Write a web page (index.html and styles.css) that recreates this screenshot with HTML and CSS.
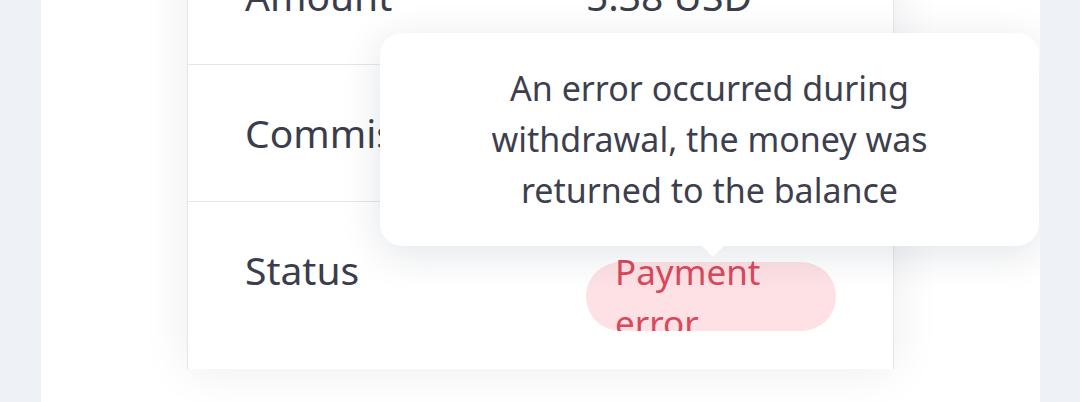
FILE: index.html
```html
<!DOCTYPE html>
<html>
<head>
<meta charset="utf-8">
<link rel="stylesheet" href="styles.css">
</head>
<body>
<div class="panel">
  <div class="details">
    <div class="row first">
      <div class="label">Amount</div>
      <div class="value">5.38 USD</div>
    </div>
    <div class="row">
      <div class="label">Commission</div>
      <div class="value">0.00 USD</div>
    </div>
    <div class="row last">
      <div class="label">Status</div>
      <div class="value">
        <div class="badge"><span>Payment error</span></div>
      </div>
    </div>
  </div>
  <div class="tooltip">
    <p>An error occurred during<br>withdrawal, the money was<br>returned to the balance</p>
  </div>
</div>
</body>
</html>
```

FILE: styles.css
```css
html, body {
  margin: 0;
  padding: 0;
}
body {
  background: #eef1f5;
  font-family: "Noto Sans", "Open Sans", sans-serif;
  overflow: hidden;
  height: 402px;
}
.panel {
  position: relative;
  margin: 0 40px 0 41px;
  height: 402px;
  background: #ffffff;
  overflow: hidden;
}
.details {
  margin-left: 146px;
  width: 705px;
  margin-top: -72px;
  border-left: 1px solid #e6e6e9;
  border-right: 1px solid #e6e6e9;
  background: #fff;
  box-shadow: 0 0 45px rgba(20, 30, 60, 0.08);
}
.row {
  display: grid;
  grid-template-columns: 341px 1fr;
  padding-left: 57px;
  height: 136px;
  border-bottom: 1px solid #e6e6e9;
  align-items: center;
  box-sizing: content-box;
}
.row.last {
  border-bottom: none;
  height: 167px;
  align-items: start;
}
.label, .value {
  font-size: 39px;
  color: #3b3d4d;
  line-height: 52px;
}
.row.last .label {
  padding-top: 42px;
}
.row.last .value {
  padding-top: 60px;
}
.badge {
  display: flow-root;
  width: 250px;
  height: 69px;
  border-radius: 35px;
  background: #fde1e5;
  box-sizing: border-box;
  padding: 0 30px 0 29px;
  clip-path: inset(-20px 0 0 0);
  color: #d9495c;
  font-size: 35px;
  line-height: 51px;
}
.badge span {
  display: block;
  margin-top: -16px;
}
.tooltip {
  position: absolute;
  left: 339px;
  top: 33px;
  width: 659px;
  height: 213px;
  background: #fff;
  border-radius: 22px;
  box-shadow: 0 8px 40px rgba(20, 30, 60, 0.12);
  display: flex;
  align-items: center;
  justify-content: center;
}
.tooltip::after {
  content: "";
  position: absolute;
  left: 321px;
  bottom: -11px;
  width: 0;
  height: 0;
  border-left: 12px solid transparent;
  border-right: 12px solid transparent;
  border-top: 12px solid #fff;
}
.tooltip p {
  margin: 0;
  text-align: center;
  font-size: 34px;
  line-height: 51px;
  color: #3d3f4e;
}
```
